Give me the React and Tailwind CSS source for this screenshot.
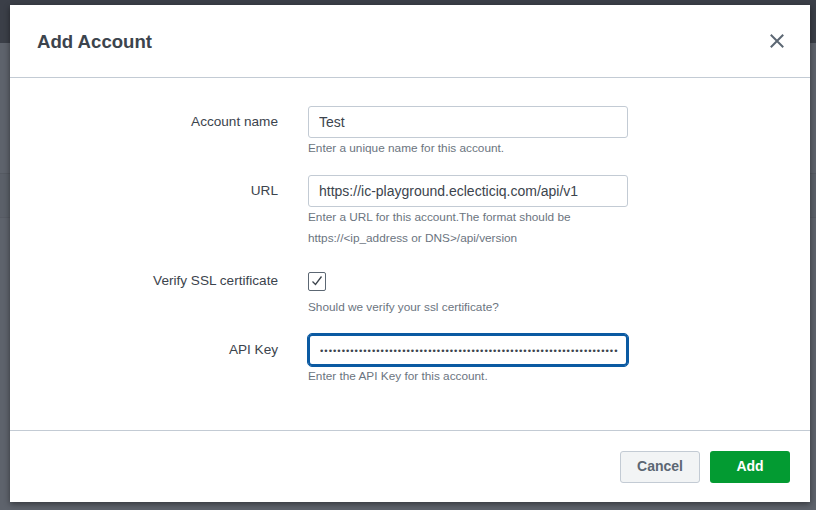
const FONT = { fontFamily: '"Liberation Sans", Arial, sans-serif' }

// Một hàng form: nhãn căn phải, ô nhập + dòng gợi ý bên dưới
function Row({ label, help, children }) {
  return (
    <div className="flex">
      <div className="w-[268px] shrink-0 h-8 flex items-center justify-end text-[13.6px] text-[#3c444d]">
        {label}
      </div>
      <div className="ml-[30px] w-[320px]">
        {children}
        <div className="text-[11.8px] leading-[21px] text-[#6b7480]">{help}</div>
      </div>
    </div>
  )
}

export default function App() {
  return (
    <div className="relative w-[816px] h-[510px] overflow-hidden bg-[#5e636c]" style={FONT}>
      {/* nền phía sau lớp phủ */}
      <div className="h-[43px] bg-[#3b3f48]" />
      <div className="h-[131px] border-b border-[#555a62]" />
      <div className="h-[44px] border-b border-[#575b64] bg-[#5b6069]" />

      {/* hộp thoại */}
      <div className="absolute left-[10px] top-[5px] w-[800px] h-[497px] bg-white flex flex-col shadow-[0_2px_6px_rgba(0,0,0,0.45)]">
        <div className="h-[73px] border-b border-[#c3cbd4] flex items-center justify-between pl-[27px] pr-[25px]">
          <h2 className="text-[18.6px] font-bold text-[#3c444d] pt-px">Add Account</h2>
          <svg width="16" height="16" viewBox="0 0 16 16" className="text-[#5c6773]">
            <path d="M2.5 2.5l11 11M13.5 2.5l-11 11" stroke="currentColor" strokeWidth="2" strokeLinecap="square" />
          </svg>
        </div>

        <div className="flex-1 pt-[28px] flex flex-col gap-4 border-b border-[#c3cbd4]">
          <Row label="Account name" help="Enter a unique name for this account.">
            <input readOnly value="Test"
              className="w-full h-8 border border-[#c3cbd4] rounded-[3px] px-[10px] text-[14px] text-[#3c444d] outline-none" />
          </Row>
          <Row label="URL" help={<>Enter a URL for this account.The format should be<br />https://&lt;ip_address or DNS&gt;/api/version</>}>
            <input readOnly value="https://ic-playground.eclecticiq.com/api/v1"
              className="w-full h-8 border border-[#c3cbd4] rounded-[3px] px-[10px] text-[14px] text-[#3c444d] outline-none" />
          </Row>
          <Row label="Verify SSL certificate" help="Should we verify your ssl certificate?">
            <div className="h-8 flex items-center">
              <div className="w-[18px] h-[19px] border border-[#5c6773] rounded-[2px] flex items-center justify-center">
                <svg width="14" height="14" viewBox="0 0 14 14">
                  <path d="M2.5 7.5l3 3 6-8" fill="none" stroke="#3c444d" strokeWidth="1.3" />
                </svg>
              </div>
            </div>
          </Row>
          <Row label="API Key" help="Enter the API Key for this account.">
            <input readOnly type="password" value={'x'.repeat(100)}
              className="w-full h-8 border-2 border-[#0b5aa2] rounded-[4px] pl-[10px] pr-[8px] text-[9.5px] tracking-[1px] text-[#3c444d] outline outline-1 outline-[#0b5aa2]" />
          </Row>
        </div>

        <div className="h-[71px] flex items-center justify-end gap-[10px] pr-[20px]">
          <button className="w-20 h-8 rounded-[3px] border border-[#c3cbd4] bg-[#f2f4f5] text-[14px] font-bold text-[#5c6773]">
            Cancel
          </button>
          <button className="w-20 h-8 rounded-[3px] bg-[#039b32] text-[14px] font-bold text-white">
            Add
          </button>
        </div>
      </div>
    </div>
  )
}
